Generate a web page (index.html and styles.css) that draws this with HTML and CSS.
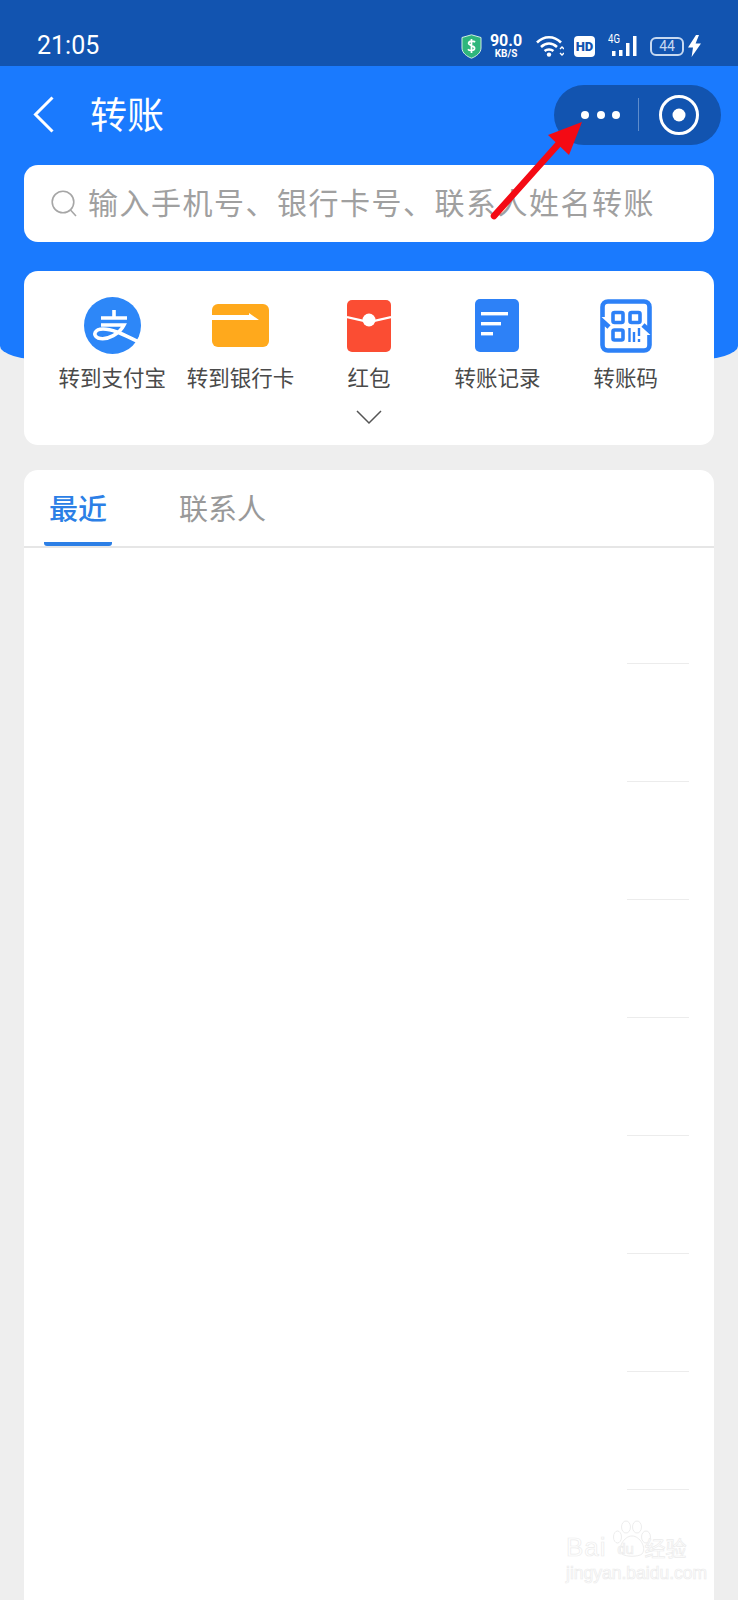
FILE: index.html
```html
<!DOCTYPE html>
<html>
<head>
    <title>转账</title>
    <link rel="stylesheet" href="styles.css">
</head>
<body>
    <div class="page">
        <div class="header">
            <div class="status">
                <span class="time">21:05</span>
                <div class="status-icons">
                    <svg class="ic-shield" width="21" height="25" viewBox="0 0 21 25">
                        <path d="M10.5 .8L20 3.5V14C20 19 15 22.5 10.5 24.2C6 22.5 1 19 1 14V3.5Z" fill="#2fb67c" stroke="#cfeee0" stroke-width="1"/>
                        <path d="M14 8.2C13 6.8 8 6.4 7.6 9.2C7.3 12 13.8 11.2 13.6 14.4C13.3 17.2 8 16.9 7 15.2M10.5 5V19" fill="none" stroke="#fff" stroke-width="1.7"/>
                    </svg>
                    <div class="speed">
                        <span class="speed-num">90.0</span>
                        <span class="speed-unit">KB/S</span>
                    </div>
                    <svg class="ic-wifi" width="28" height="22" viewBox="0 0 28 22">
                        <path d="M1 7.500C8 .5 18 .5 25 7.500M5 12C10 7.500 16 7.500 21 12M8.600 16C11 14 15 14 17.400 16" fill="none" stroke="#fff" stroke-width="2.600"/>
                        <circle cx="13" cy="19.600" r="2.200" fill="#fff"/>
                        <path d="M24 14l2 -2 2 2M24 18l2 2 2 -2" fill="none" stroke="#fff" stroke-width="1.400"/>
                    </svg>
                    <span class="hd">HD</span>
                    <div class="signal">
                        <span class="net">4G</span>
                        <svg width="29" height="22" viewBox="0 0 29 22">
                            <rect x="4" y="16" width="3.500" height="5" fill="#fff"/>
                            <rect x="11" y="15" width="3.500" height="6" fill="#fff"/>
                            <rect x="18" y="8" width="3.500" height="13" fill="#fff"/>
                            <rect x="25" y="1" width="3.500" height="20" fill="#fff"/>
                        </svg>
                    </div>
                    <div class="battery"><span>44</span></div>
                    <svg class="ic-bolt" width="13" height="22" viewBox="0 0 13 22">
                        <path d="M8 0L0 12.500H5L3.600 22L13 8.500H7.600L11 0Z" fill="#fff"/>
                    </svg>
                </div>
            </div>
            <div class="nav">
                <svg class="back" width="21" height="37" viewBox="0 0 21 37">
                    <path d="M19.500 1.500L2.500 18.500L19.500 35.500" fill="none" stroke="#fff" stroke-width="3"/>
                </svg>
                <h1 class="title">转账</h1>
                <div class="capsule">
                    <div class="dots"><i></i><i></i><i></i></div>
                    <div class="capsule-line"></div>
                    <svg width="42" height="42" viewBox="0 0 42 42">
                        <circle cx="21" cy="21" r="18.500" fill="none" stroke="#fff" stroke-width="3"/>
                        <circle cx="21" cy="21" r="6.500" fill="#fff"/>
                    </svg>
                </div>
            </div>
            <div class="search">
                <svg width="27" height="28" viewBox="0 0 27 28">
                    <circle cx="12" cy="12" r="10.800" fill="none" stroke="#a6a6a6" stroke-width="1.600"/>
                    <path d="M19.500 20L25 26" fill="none" stroke="#a6a6a6" stroke-width="1.600"/>
                </svg>
                <span class="search-text">输入手机号、银行卡号、联系人姓名转账</span>
            </div>
        </div>

        <div class="panel">
            <div class="actions">
                <div class="action">
                    <div class="action-icon">
                        <svg width="57" height="57" viewBox="0 0 57 57">
                            <circle cx="28.500" cy="28.500" r="28.500" fill="#2d87f8"/>
                            <path d="M17 21H43M30 13V21M17 28H40C36 36 24 44 14 41C8 38 11 32 19 32C30 32 42 39 55 45" fill="none" stroke="#fff" stroke-width="3.600"/>
                        </svg>
                    </div>
                    <span class="action-name">转到支付宝</span>
                </div>
                <div class="action">
                    <div class="action-icon">
                        <svg width="57" height="43" viewBox="0 0 57 43">
                            <rect width="57" height="43" rx="6" fill="#ffa91c"/>
                            <path d="M0 11H37V9L47 16H0Z" fill="#fff"/>
                        </svg>
                    </div>
                    <span class="action-name">转到银行卡</span>
                </div>
                <div class="action">
                    <div class="action-icon">
                        <svg width="44" height="52" viewBox="0 0 44 52">
                            <rect width="44" height="52" rx="5" fill="#fb4d33"/>
                            <path d="M0 17L22 22L44 17" fill="none" stroke="#fff" stroke-width="2.200"/>
                            <circle cx="22" cy="20" r="6.500" fill="#fff"/>
                        </svg>
                    </div>
                    <span class="action-name">红包</span>
                </div>
                <div class="action">
                    <div class="action-icon">
                        <svg width="44" height="53" viewBox="0 0 44 53">
                            <rect width="44" height="53" rx="5" fill="#2d81f7"/>
                            <rect x="6" y="13" width="27" height="3.400" fill="#fff"/>
                            <rect x="6" y="23" width="20" height="3.400" fill="#fff"/>
                            <rect x="6" y="33" width="12" height="3.400" fill="#fff"/>
                        </svg>
                    </div>
                    <span class="action-name">转账记录</span>
                </div>
                <div class="action">
                    <div class="action-icon">
                        <svg width="52" height="54" viewBox="0 0 52 54">
                            <path d="M2.500 18V8C2.500 4.500 5 2.500 8 2.500H44C47 2.500 49.500 4.500 49.500 8V32L43 26M49.500 36V46C49.500 49.500 47 51.500 44 51.500H8C5 51.500 2.500 49.500 2.500 46V22L9 28" fill="none" stroke="#2d81f7" stroke-width="4.600"/>
                            <rect x="13" y="13.500" width="10" height="10" rx="1.500" fill="none" stroke="#2d81f7" stroke-width="3.600"/>
                            <rect x="30" y="13.500" width="10" height="10" rx="1.500" fill="none" stroke="#2d81f7" stroke-width="3.600"/>
                            <rect x="13" y="31" width="10" height="10" rx="1.500" fill="none" stroke="#2d81f7" stroke-width="3.600"/>
                            <path d="M29.500 29V43M34 33V43M39 29V37M39 40V43" fill="none" stroke="#2d81f7" stroke-width="2.400"/>
                        </svg>
                    </div>
                    <span class="action-name">转账码</span>
                </div>
            </div>
            <svg class="more" width="26" height="15" viewBox="0 0 26 15">
                <path d="M1 1L13 13L25 1" fill="none" stroke="#555" stroke-width="1.500"/>
            </svg>
        </div>

        <div class="contacts">
            <div class="tabs">
                <div class="tab tab-active">最近</div>
                <div class="tab">联系人</div>
            </div>
            <div class="row"><span class="row-line"></span></div>
            <div class="row"><span class="row-line"></span></div>
            <div class="row"><span class="row-line"></span></div>
            <div class="row"><span class="row-line"></span></div>
            <div class="row"><span class="row-line"></span></div>
            <div class="row"><span class="row-line"></span></div>
            <div class="row"><span class="row-line"></span></div>
            <div class="row"><span class="row-line"></span></div>
            <div class="row"></div>
        </div>

        <!-- annotation drawn on top of the screenshot -->
        <svg class="arrow" width="738" height="260" viewBox="0 0 738 260">
            <path d="M494 216L562 140" fill="none" stroke="#f40a14" stroke-width="6.500" stroke-linecap="round"/>
            <path d="M582 122L548 135L569 155Z" fill="#f40a14"/>
        </svg>

        <div class="watermark">
            <svg class="paw" width="40" height="38" viewBox="0 0 40 38">
                <g fill="#fff" stroke="#ededed" stroke-width="1">
                    <ellipse cx="4.500" cy="17" rx="4" ry="6"/>
                    <ellipse cx="13" cy="7" rx="4.500" ry="6"/>
                    <ellipse cx="24" cy="7" rx="4.500" ry="6"/>
                    <ellipse cx="33" cy="17" rx="4.500" ry="6"/>
                    <path d="M19 16C27 16 34 28 29 34C25 37 13 37 9 34C4 28 11 16 19 16Z"/>
                </g>
            </svg>
            <div class="wm-main"><span class="wm-brand">Bai</span><span class="wm-du">du</span><span class="wm-cn">经验</span></div>
            <div class="wm-site">jingyan.baidu.com</div>
        </div>
    </div>
</body>
</html>
```

FILE: styles.css
```css
* {
    box-sizing: border-box;
}
body {
    margin: 0;
    background-color: #eeeeee;
    font-family: "Noto Sans CJK SC", "Noto Sans", sans-serif;
}
.page {
    position: relative;
    width: 738px;
    height: 1600px;
    overflow: hidden;
    background-color: #eeeeee;
}
.header {
    height: 360px;
    background-color: #1a7afe;
    border-radius: 0 0 46px 46px / 0 0 14px 14px;
}
.status {
    display: flex;
    align-items: center;
    justify-content: space-between;
    height: 66px;
    padding: 0 37px;
    background-color: #1254b0;
    color: #fff;
}
.time {
    font-family: Roboto, sans-serif;
    font-size: 25px;
    margin-top: 24px;
}
.status-icons {
    display: flex;
    align-items: center;
    margin-top: 26px;
    height: 26px;
}
.ic-shield {
    margin-right: 7px;
}
.speed {
    display: flex;
    flex-direction: column;
    align-items: center;
    width: 34px;
    font-family: Roboto, sans-serif;
    font-weight: 700;
    margin-right: 13px;
}
.speed-num {
    font-size: 16px;
    line-height: 15px;
}
.speed-unit {
    font-size: 10px;
    line-height: 11px;
}
.ic-wifi {
    margin-right: 10px;
}
.hd {
    width: 21px;
    height: 21px;
    border-radius: 4px;
    background-color: #fff;
    color: #1254b0;
    font-family: Roboto, sans-serif;
    font-size: 13px;
    font-weight: 900;
    line-height: 21px;
    text-align: center;
    margin-right: 13px;
}
.signal {
    position: relative;
    width: 29px;
    height: 22px;
    margin-right: 13px;
}
.net {
    position: absolute;
    left: 0;
    top: -3px;
    color: #fff;
    font-family: Roboto, sans-serif;
    font-size: 12px;
    line-height: 14px;
    transform: scaleX(.8);
    transform-origin: left;
}
.battery {
    width: 34px;
    height: 19px;
    border: 2px solid #c6d8f0;
    border-radius: 6px;
    margin-right: 4px;
    color: #c6d8f0;
    font-family: Roboto, sans-serif;
    font-size: 14px;
    line-height: 15px;
    text-align: center;
}
.nav {
    display: flex;
    align-items: center;
    height: 99px;
    padding: 0 17px 2px 33px;
}
.back {
    margin-right: 36px;
}
.title {
    margin: -3px 0 0;
    color: #fff;
    font-size: 37px;
    font-weight: 400;
    line-height: 48px;
}
.capsule {
    display: flex;
    align-items: center;
    width: 167px;
    height: 60px;
    margin-left: auto;
    padding-left: 27px;
    border-radius: 30px;
    background-color: #1254b0;
}
.dots {
    display: flex;
    gap: 7.500px;
}
.dots i {
    width: 8px;
    height: 8px;
    border-radius: 50%;
    background-color: #fff;
}
.capsule-line {
    width: 1px;
    height: 33px;
    margin: 0 19px 0 18px;
    background-color: #5e8ccc;
}
.search {
    display: flex;
    align-items: center;
    height: 77px;
    margin: 0 24px;
    padding-left: 27px;
    border-radius: 14px;
    background-color: #fff;
}
.search-text {
    margin: -6px 0 0 10px;
    color: #a0a0a0;
    font-size: 30px;
    letter-spacing: 1.500px;
    white-space: nowrap;
}
.panel {
    display: flex;
    flex-direction: column;
    align-items: center;
    position: relative;
    height: 174px;
    margin: -89px 24px 0;
    padding: 26px 0 0;
    border-radius: 14px;
    background-color: #fff;
}
.actions {
    display: grid;
    grid-template-columns: repeat(5, 128.400px);
}
.action {
    display: flex;
    flex-direction: column;
    align-items: center;
}
.action-icon {
    display: flex;
    align-items: center;
    justify-content: center;
    height: 57px;
}
.action-name {
    margin-top: 8px;
    color: #4a4a4a;
    font-size: 21.500px;
    line-height: 30px;
    white-space: nowrap;
}
.more {
    margin-top: 18px;
}
.contacts {
    margin: 25px 24px 0;
    border-radius: 14px 14px 0 0;
    background-color: #fff;
}
.tabs {
    display: flex;
    height: 78px;
    margin-bottom: -2px;
    padding-left: 20px;
    border-bottom: 2px solid #e6e6e6;
}
.tab {
    height: 76px;
    padding-top: 15px;
    color: #999;
    font-size: 29px;
    line-height: 44px;
    text-align: center;
    margin-left: 67px;
}
.tab-active {
    width: 68px;
    margin-left: 0;
    color: #2c7fe6;
    font-weight: 500;
    border-bottom: 4px solid #2c7fe6;
    border-radius: 0 0 3px 3px;
    white-space: nowrap;
}
.row {
    display: flex;
    align-items: flex-end;
    justify-content: flex-end;
    height: 118px;
    padding-right: 25px;
}
.row-line {
    width: 62px;
    height: 1px;
    background-color: #ececec;
}
.arrow {
    position: absolute;
    left: 0;
    top: 0;
}
.watermark {
    position: absolute;
    left: 566px;
    top: 1518px;
    width: 136px;
    color: #fff;
    -webkit-text-stroke: .7px #ececec;
}
.paw {
    position: absolute;
    left: 47px;
    top: 2px;
}
.wm-main {
    display: flex;
    align-items: flex-end;
    position: relative;
    height: 44px;
}
.wm-brand {
    font-family: "Liberation Sans", sans-serif;
    font-size: 26px;
    line-height: 30px;
    letter-spacing: 1px;
}
.wm-du {
    width: 38px;
    font-family: "Liberation Sans", sans-serif;
    font-size: 15px;
    line-height: 26px;
    text-align: center;
}
.wm-cn {
    font-size: 21px;
    line-height: 30px;
}
.wm-site {
    font-family: "Liberation Sans", sans-serif;
    font-size: 17.500px;
    line-height: 22px;
    white-space: nowrap;
}
```
